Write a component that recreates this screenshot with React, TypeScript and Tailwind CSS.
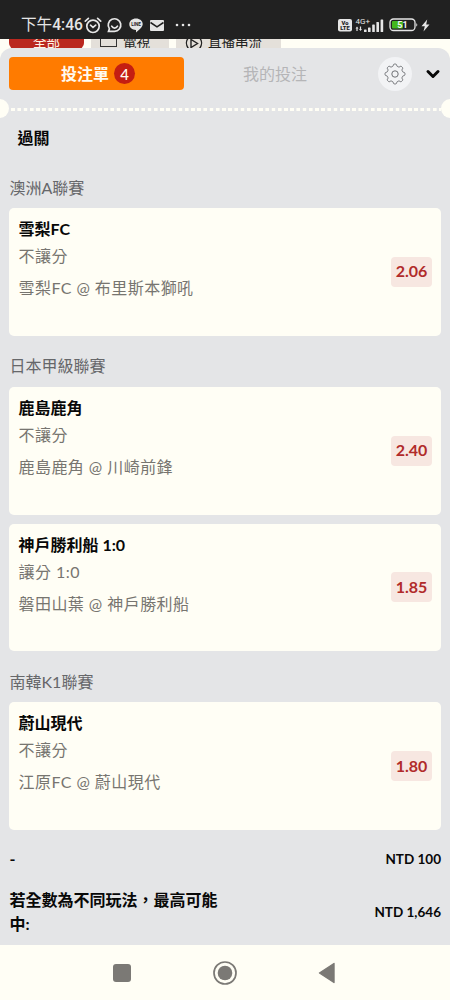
import { ChevronDown } from 'lucide-react';

type Bet = { pick: string; market: string; match: string; odds: string };

const leagues: { name: string; bets: Bet[] }[] = [
  {
    name: '澳洲A聯賽',
    bets: [{ pick: '雪梨FC', market: '不讓分', match: '雪梨FC @ 布里斯本獅吼', odds: '2.06' }]
  },
  {
    name: '日本甲級聯賽',
    bets: [
      { pick: '鹿島鹿角', market: '不讓分', match: '鹿島鹿角 @ 川崎前鋒', odds: '2.40' },
      { pick: '神戶勝利船 1:0', market: '讓分 1:0', match: '磐田山葉 @ 神戶勝利船', odds: '1.85' }
    ]
  },
  {
    name: '南韓K1聯賽',
    bets: [{ pick: '蔚山現代', market: '不讓分', match: '江原FC @ 蔚山現代', odds: '1.80' }]
  }
];

const StatusBar = () => (
  <div className="flex h-[39px] items-start bg-[#212121] pl-[21px] pt-[15px] text-[#e6e6e6]">
    <span className="w-[63px] whitespace-nowrap font-['Roboto','Noto_Sans_CJK_TC',sans-serif] text-[15.6px] leading-[21px]">
      下午<span className="font-medium">4:46</span>
    </span>
    <svg className="mt-[2px]" width="18" height="17" viewBox="0 0 18 17" fill="none" stroke="currentColor" strokeWidth="1.7" strokeLinecap="round">
      <circle cx="9" cy="9.3" r="6.2" />
      <path d="M1.3 4.2 4.4 1.4M16.7 4.2 13.6 1.4" />
      <path d="M6.5 8.2 9 10.3l2.7-2.2" />
    </svg>
    <svg className="ml-[4px] mt-[2px]" width="17" height="17" viewBox="0 0 17 17" fill="none" stroke="currentColor" strokeWidth="1.7" strokeLinecap="round">
      <path d="M2.5 14.4h6a6.3 6.3 0 1 0-5.1-2.6Z" />
      <path d="M5.7 9.2c1.4 2.5 4.4 2.5 5.8 0" />
    </svg>
    <svg className="ml-[6px] mt-[3px]" width="14" height="15" viewBox="0 0 14 15">
      <path fill="currentColor" d="M7 .5c3.8 0 6.7 2.4 6.7 5.6 0 3.2-3.7 6-6.7 8.4v-2.6C3.2 11.9.3 9.5.3 6.2S3.2.5 7 .5Z" />
      <text x="7" y="7.9" textAnchor="middle" fontSize="4.6" fontWeight="700" fontFamily="Roboto, sans-serif" fill="#212121">LINE</text>
    </svg>
    <svg className="ml-[7px] mt-[5px]" width="14" height="11" viewBox="0 0 14 11">
      <rect width="14" height="11" rx="1" fill="currentColor" />
      <path d="M.5 2.5 7 6.8l6.5-4.3" fill="none" stroke="#212121" strokeWidth="1.5" />
    </svg>
    <svg className="ml-[11px] mt-[8px]" width="16" height="4" viewBox="0 0 16 4" fill="currentColor">
      <circle cx="2" cy="2" r="1.3" />
      <circle cx="8" cy="2" r="1.3" />
      <circle cx="14" cy="2" r="1.3" />
    </svg>

    <svg className="ml-auto mt-[4px]" width="14" height="13" viewBox="0 0 14 13" fontFamily="Roboto, sans-serif" fontWeight="900">
      <rect width="14" height="12.5" rx="2" fill="currentColor" />
      <text x="7" y="5.9" textAnchor="middle" fontSize="5.8" fill="#212121">Vo</text>
      <text x="7" y="11.2" textAnchor="middle" fontSize="5.8" fill="#212121">LTE</text>
    </svg>
    <svg className="ml-[3px] mt-[1px]" width="30" height="17" viewBox="0 0 30 17" fill="currentColor">
      <text x="0.5" y="8" fontSize="8" fontFamily="Roboto, sans-serif">4G+</text>
      <path d="M2 10.5 3.5 12.5H2.6V15H1.4V12.5H.5ZM5.5 15 4 13h.9v-2.5h1.2V13H7Z" />
      <rect x="9" y="13.5" width="2.6" height="2.5" rx=".6" />
      <rect x="13" y="11.5" width="2.6" height="4.5" rx=".6" />
      <rect x="17.2" y="8.5" width="2.6" height="7.5" rx=".6" />
      <rect x="21.4" y="6" width="2.6" height="10" rx=".6" />
      <rect x="25.6" y="3.5" width="2.6" height="12.5" rx=".6" />
    </svg>
    <svg className="ml-[4px] mt-[3px]" width="30" height="14" viewBox="0 0 30 14">
      <rect x="1" y="1" width="25" height="11.5" rx="3.5" fill="none" stroke="currentColor" strokeWidth="1.3" />
      <rect x="3" y="3" width="11" height="7.5" rx="1" fill="#43b71d" />
      <path d="M27.3 5.2c1.3.2 1.3 3 0 3.2Z" fill="currentColor" />
      <text x="13.5" y="10" textAnchor="middle" fontSize="9" fontWeight="700" fontFamily="Roboto, sans-serif" fill="#f2f2f2">51</text>
    </svg>
    <svg className="ml-[2px] mr-[20px] mt-[4px]" width="9" height="13" viewBox="0 0 9 13">
      <path d="M6.2.5.5 7.2h3.3L2.5 12.5 8.5 5.5H5.2Z" fill="currentColor" />
    </svg>
  </div>
);

// scrolled halfway under the status bar, the slip sheet covers the rest
const FilterChips = () => (
  <div className="flex h-[23px] items-start gap-[7px] overflow-hidden pl-[9px] text-[13.5px] leading-[7px] text-[#222]">
    <div className="flex h-[10px] w-[75px] justify-center rounded-b-[6px] bg-[#ba281f] text-[#fff5e8]">
      全部
    </div>
    <div className="flex h-[14px] w-[78px] bg-[#e4e0da] pl-[9px]">
      <span className="-mt-2 h-[16px] w-[17px] border-[1.5px] border-[#333]" />
      <span className="ml-[6px]">電視</span>
    </div>
    <div className="flex h-[14px] w-[105px] bg-[#e4e0da] pl-[9px]">
      <svg className="-mt-[3px]" width="18" height="14" viewBox="0 0 18 14" fill="none" stroke="#222" strokeWidth="1.4">
        <path d="M3.8 1.5C.8 4.5.8 9 3.3 12.5M14.2 1.5c3 3 3 7.5.5 11" />
        <path d="M6 3.5v8l6.500-4Z" />
      </svg>
      <span className="ml-[5px]">直播串流</span>
    </div>
  </div>
);

// eight rounded teeth around the centre
const gearPoints = Array.from({ length: 160 }, (_, i) => {
  const a = (i / 160) * Math.PI * 2;
  const r = 8.9 + 1.05 * Math.tanh(2.2 * Math.cos(8 * a));
  return `${(11 + r * Math.cos(a)).toFixed(2)},${(11 + r * Math.sin(a)).toFixed(2)}`;
}).join(' ');

const GearIcon = () => (
  <svg width="22" height="22" viewBox="0 0 22 22" fill="none" stroke="#606266" strokeWidth="0.9" strokeLinejoin="round">
    <polygon points={gearPoints} />
    <circle cx="11" cy="11" r="3.2" />
  </svg>
);

const SlipHeader = () => (
  <div className="flex h-[51px] shrink-0 items-center pl-[9px]">
    <button className="flex h-[33px] w-[175px] items-center justify-center gap-[5px] rounded-[4px] bg-[#ff7b00] pl-[3px] font-bold text-[#fffaf0]">
      <span>投注單</span>
      <span className="flex size-[21px] items-center justify-center rounded-full bg-[#c41e12] text-[15px] font-medium">
        4
      </span>
    </button>
    <button className="w-[182px] text-center text-[#b5b5b7]">我的投注</button>
    <button className="ml-[12px] flex size-[34px] items-center justify-center rounded-full bg-[#f2f3f5]">
      <GearIcon />
    </button>
    <ChevronDown className="ml-[11px]" size={20} strokeWidth={3.6} color="#080808" />
  </div>
);

const Divider = () => (
  <div className="-mx-[10px] -mt-px flex h-[20px] shrink-0 items-center">
    <span className="size-[19px] rounded-full bg-[#fffef5]" />
    <span className="mt-[3px] h-[3px] flex-1 bg-[repeating-linear-gradient(90deg,transparent_0_2px,#fffef5_2.5px_5.7px,transparent_6.2px)]" />
    <span className="size-[19px] rounded-full bg-[#fffef5]" />
  </div>
);

const BetCard = ({ bet }: { bet: Bet }) => (
  <div className="flex h-[127.8px] items-center justify-between rounded-[5px] bg-[#fffef5] pl-[9.5px] pr-[9px]">
    <div className="h-full pt-[9px] text-[#777570]">
      <p className="h-[25px] font-bold leading-6 text-[#080808]">{bet.pick}</p>
      <p className="h-[34px] leading-7 tracking-[0.45px]">{bet.market}</p>
      <p className="leading-6 tracking-[0.45px]">{bet.match}</p>
    </div>
    <span className="flex h-[30px] w-[41px] items-center justify-center rounded-[4px] bg-[#f7e7e1] pb-px font-bold text-[#b12b2a]">
      {bet.odds}
    </span>
  </div>
);

const NavBar = () => (
  <div className="flex h-[55px] items-center bg-[#fffef5] pl-[113px]">
    <span className="size-[18px] rounded-[3px] bg-[#7b7975]" />
    <svg className="ml-[81px]" width="26" height="26" viewBox="0 0 26 26">
      <circle cx="13" cy="13" r="11" fill="none" stroke="#7b7975" strokeWidth="1.7" />
      <circle cx="13" cy="13" r="7.3" fill="#7b7975" />
    </svg>
    <svg className="ml-[80px]" width="18" height="22" viewBox="0 0 18 22">
      <path d="M1.5 11 16 1.5v19Z" fill="#7b7975" stroke="#7b7975" strokeWidth="1.4" strokeLinejoin="round" />
    </svg>
  </div>
);

export default function App() {
  return (
    <div className="h-[1000px] w-[450px] overflow-hidden bg-[#fffef5] font-['Lato','Noto_Sans_CJK_TC',sans-serif] text-[16px] leading-6">
      <StatusBar />
      <FilterChips />
      <main className="relative -mt-[14px] flex h-[897px] flex-col overflow-hidden rounded-t-[12px] bg-[#e4e5e7]">
        <SlipHeader />
        <Divider />
        <h1 className="h-[39px] shrink-0 pl-[17.5px] pt-[8px] font-bold text-[#080808]">過關</h1>
        <div className="px-[9px]">
          {leagues.map((league) => (
            <section key={league.name}>
              <h2 className="h-[51px] pl-[0.5px] pt-[18.7px] text-[#66676a]">{league.name}</h2>
              <div className="flex flex-col gap-[9px]">
                {league.bets.map((bet) => (
                  <BetCard key={bet.match} bet={bet} />
                ))}
              </div>
            </section>
          ))}
          <div className="flex h-[58px] items-center justify-between pl-[0.5px] font-bold text-[#080808]">
            <span>-</span>
            <span className="text-[13.5px]">NTD 100</span>
          </div>
          <div className="flex items-center justify-between pl-[0.5px] font-bold text-[#080808]">
            <span className="w-[216px]">若全數為不同玩法，最高可能中:</span>
            <span className="text-[13.5px]">NTD 1,646</span>
          </div>
        </div>
      </main>
      <NavBar />
    </div>
  );
}
